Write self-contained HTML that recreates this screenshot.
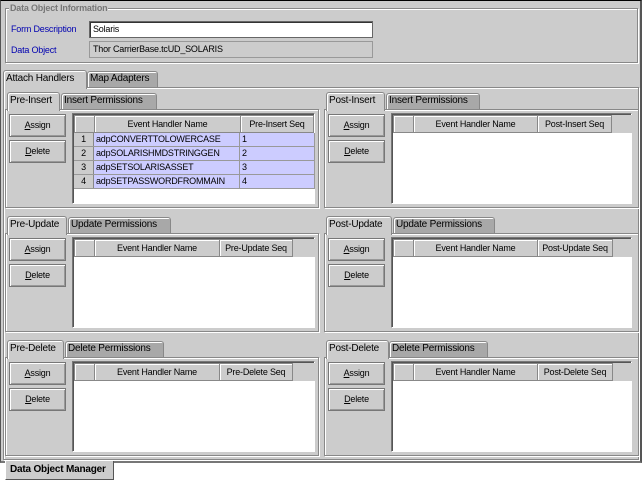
<!DOCTYPE html>
<html><head><meta charset="utf-8"><style>
*{box-sizing:border-box;margin:0;padding:0}
body{width:643px;height:480px;background:#fff;font-family:"Liberation Sans",sans-serif;font-size:9px;color:#000;position:relative;overflow:hidden;letter-spacing:-0.2px}
.a{position:absolute}
#win{left:0;top:0;width:642px;height:463px;background:#cccccc;border-top:1px solid #000;border-left:1px solid #555;border-right:2px solid #555;border-bottom:2px solid #777}
.grp{border:1px solid #888;box-shadow:1px 1px 0 #fff inset,1px 1px 0 #fff}
.lbl{color:#0000b0;font-size:9px}
.tab{height:18px;border:1px solid #888;border-bottom:none;border-radius:3px 3px 0 0;padding:2px 2px 0;font-size:10px;white-space:nowrap;overflow:hidden;box-shadow:1px 1px 0 #fff inset}
.sel{background:#cccccc;z-index:2}
.dk{background:#a8a8a8}
.pnl{border:1px solid #888;box-shadow:1px 1px 0 #fff inset,1px 1px 0 #fff;background:#cccccc}
.btn{width:57px;height:23px;border:1px solid #777;box-shadow:1px 1px 0 #fff inset,-1px -1px 0 #999 inset;text-align:center;line-height:21px;font-size:9px;background:#cccccc}
.tbl{background:#fff;border:1px solid #777;border-right-color:#fff;border-bottom-color:#fff;box-shadow:1px 1px 0 #555 inset}
.hg{height:18px;background:#cccccc}
.hd{height:18px;background:#cccccc;border:1px solid #888;box-shadow:1px 1px 0 #fff inset;text-align:center;line-height:16px;font-size:9px;white-space:nowrap;overflow:hidden}
.row{height:14px;line-height:13px;font-size:9px;border-bottom:1px solid #999;display:flex}
.num{background:#cccccc;text-align:center;border-right:1px solid #888}
.cell{background:#ccccff;padding-left:2px;border-right:1px solid #999;white-space:nowrap;overflow:hidden}
u{text-decoration:underline}
</style></head><body>
<div id="win" class="a"></div>

<div class="a grp" style="left:5px;top:8px;width:633px;height:55px"></div>
<div class="a" style="left:9px;top:3px;background:#cccccc;padding:0 1px;color:#777;font-weight:bold;font-size:9px">Data Object Information</div>
<div class="a lbl" style="left:11px;top:24px">Form Description</div>
<div class="a" style="left:89px;top:21px;width:284px;height:17px;background:#fff;border:1px solid #666;box-shadow:1px 1px 0 #333 inset;padding:2px 3px;font-size:9px">Solaris</div>
<div class="a lbl" style="left:11px;top:45px">Data Object</div>
<div class="a" style="left:89px;top:41px;width:284px;height:17px;border:1px solid #999;padding:2px 3px;font-size:9px">Thor CarrierBase.tcUD_SOLARIS</div>

<div class="a pnl" style="left:3px;top:87px;width:636px;height:373px"></div>
<div class="a tab sel" style="left:3px;top:70px;width:84px;height:19px">Attach Handlers</div>
<div class="a tab dk" style="left:87px;top:71px;width:71px;height:16px;padding-top:1px">Map Adapters</div>

<!-- row1 left -->
<div class="a pnl" style="left:5px;top:109px;width:314px;height:99px"></div>
<div class="a tab sel" style="left:7px;top:92px;width:53px;height:19px">Pre-Insert</div>
<div class="a tab dk" style="left:61px;top:93px;width:96px;height:16px;padding-top:1px">Insert Permissions</div>
<div class="a btn" style="left:9px;top:114px"><u>A</u>ssign</div>
<div class="a btn" style="left:9px;top:140px"><u>D</u>elete</div>
<div class="a tbl" style="left:72px;top:113px;width:243px;height:91px">
 <div class="a hd" style="left:1px;top:1px;width:21px"></div>
 <div class="a hd" style="left:21px;top:1px;width:147px">Event Handler Name</div>
 <div class="a hd" style="left:167px;top:1px;width:74px">Pre-Insert Seq</div>
 <div class="a" style="left:1px;top:19px;width:241px">
  <div class="row"><div class="num" style="width:20px">1</div><div class="cell" style="width:146px">adpCONVERTTOLOWERCASE</div><div class="cell" style="width:75px">1</div></div>
  <div class="row"><div class="num" style="width:20px">2</div><div class="cell" style="width:146px">adpSOLARISHMDSTRINGGEN</div><div class="cell" style="width:75px">2</div></div>
  <div class="row"><div class="num" style="width:20px">3</div><div class="cell" style="width:146px">adpSETSOLARISASSET</div><div class="cell" style="width:75px">3</div></div>
  <div class="row"><div class="num" style="width:20px">4</div><div class="cell" style="width:146px">adpSETPASSWORDFROMMAIN</div><div class="cell" style="width:75px">4</div></div>
 </div>
</div>

<!-- row1 right -->
<div class="a pnl" style="left:324px;top:109px;width:315px;height:99px"></div>
<div class="a tab sel" style="left:326px;top:92px;width:59px;height:19px">Post-Insert</div>
<div class="a tab dk" style="left:386px;top:93px;width:94px;height:16px;padding-top:1px">Insert Permissions</div>
<div class="a btn" style="left:328px;top:114px"><u>A</u>ssign</div>
<div class="a btn" style="left:328px;top:140px"><u>D</u>elete</div>
<div class="a tbl" style="left:391px;top:113px;width:241px;height:91px">
 <div class="a hg" style="left:1px;top:1px;width:239px"></div>
 <div class="a hd" style="left:1px;top:1px;width:21px"></div>
 <div class="a hd" style="left:21px;top:1px;width:125px">Event Handler Name</div>
 <div class="a hd" style="left:145px;top:1px;width:75px">Post-Insert Seq</div>
</div>

<!-- row2 left -->
<div class="a pnl" style="left:5px;top:233px;width:314px;height:99px"></div>
<div class="a tab sel" style="left:7px;top:216px;width:60px;height:19px">Pre-Update</div>
<div class="a tab dk" style="left:68px;top:217px;width:103px;height:16px;padding-top:1px">Update Permissions</div>
<div class="a btn" style="left:9px;top:238px"><u>A</u>ssign</div>
<div class="a btn" style="left:9px;top:264px"><u>D</u>elete</div>
<div class="a tbl" style="left:72px;top:237px;width:243px;height:91px">
 <div class="a hg" style="left:1px;top:1px;width:241px"></div>
 <div class="a hd" style="left:1px;top:1px;width:21px"></div>
 <div class="a hd" style="left:21px;top:1px;width:126px">Event Handler Name</div>
 <div class="a hd" style="left:146px;top:1px;width:74px">Pre-Update Seq</div>
</div>

<!-- row2 right -->
<div class="a pnl" style="left:324px;top:233px;width:315px;height:99px"></div>
<div class="a tab sel" style="left:326px;top:216px;width:66px;height:19px">Post-Update</div>
<div class="a tab dk" style="left:393px;top:217px;width:102px;height:16px;padding-top:1px">Update Permissions</div>
<div class="a btn" style="left:328px;top:238px"><u>A</u>ssign</div>
<div class="a btn" style="left:328px;top:264px"><u>D</u>elete</div>
<div class="a tbl" style="left:391px;top:237px;width:241px;height:91px">
 <div class="a hg" style="left:1px;top:1px;width:239px"></div>
 <div class="a hd" style="left:1px;top:1px;width:21px"></div>
 <div class="a hd" style="left:21px;top:1px;width:125px">Event Handler Name</div>
 <div class="a hd" style="left:145px;top:1px;width:76px">Post-Update Seq</div>
</div>

<!-- row3 left -->
<div class="a pnl" style="left:5px;top:357px;width:314px;height:99px"></div>
<div class="a tab sel" style="left:7px;top:340px;width:57px;height:19px">Pre-Delete</div>
<div class="a tab dk" style="left:65px;top:341px;width:99px;height:16px;padding-top:1px">Delete Permissions</div>
<div class="a btn" style="left:9px;top:362px"><u>A</u>ssign</div>
<div class="a btn" style="left:9px;top:388px"><u>D</u>elete</div>
<div class="a tbl" style="left:72px;top:361px;width:243px;height:91px">
 <div class="a hg" style="left:1px;top:1px;width:241px"></div>
 <div class="a hd" style="left:1px;top:1px;width:21px"></div>
 <div class="a hd" style="left:21px;top:1px;width:126px">Event Handler Name</div>
 <div class="a hd" style="left:146px;top:1px;width:74px">Pre-Delete Seq</div>
</div>

<!-- row3 right -->
<div class="a pnl" style="left:324px;top:357px;width:315px;height:99px"></div>
<div class="a tab sel" style="left:326px;top:340px;width:63px;height:19px">Post-Delete</div>
<div class="a tab dk" style="left:389px;top:341px;width:99px;height:16px;padding-top:1px">Delete Permissions</div>
<div class="a btn" style="left:328px;top:362px"><u>A</u>ssign</div>
<div class="a btn" style="left:328px;top:388px"><u>D</u>elete</div>
<div class="a tbl" style="left:391px;top:361px;width:241px;height:91px">
 <div class="a hg" style="left:1px;top:1px;width:239px"></div>
 <div class="a hd" style="left:1px;top:1px;width:21px"></div>
 <div class="a hd" style="left:21px;top:1px;width:125px">Event Handler Name</div>
 <div class="a hd" style="left:145px;top:1px;width:76px">Post-Delete Seq</div>
</div>

<div class="a" style="left:5px;top:461px;width:109px;height:19px;background:#cccccc;border:1px solid #555;border-top:none;border-left:1px solid #fff;font-weight:bold;font-size:10px;padding:3px 0 0 4px;white-space:nowrap;overflow:hidden">Data Object Manager</div>
</body></html>
